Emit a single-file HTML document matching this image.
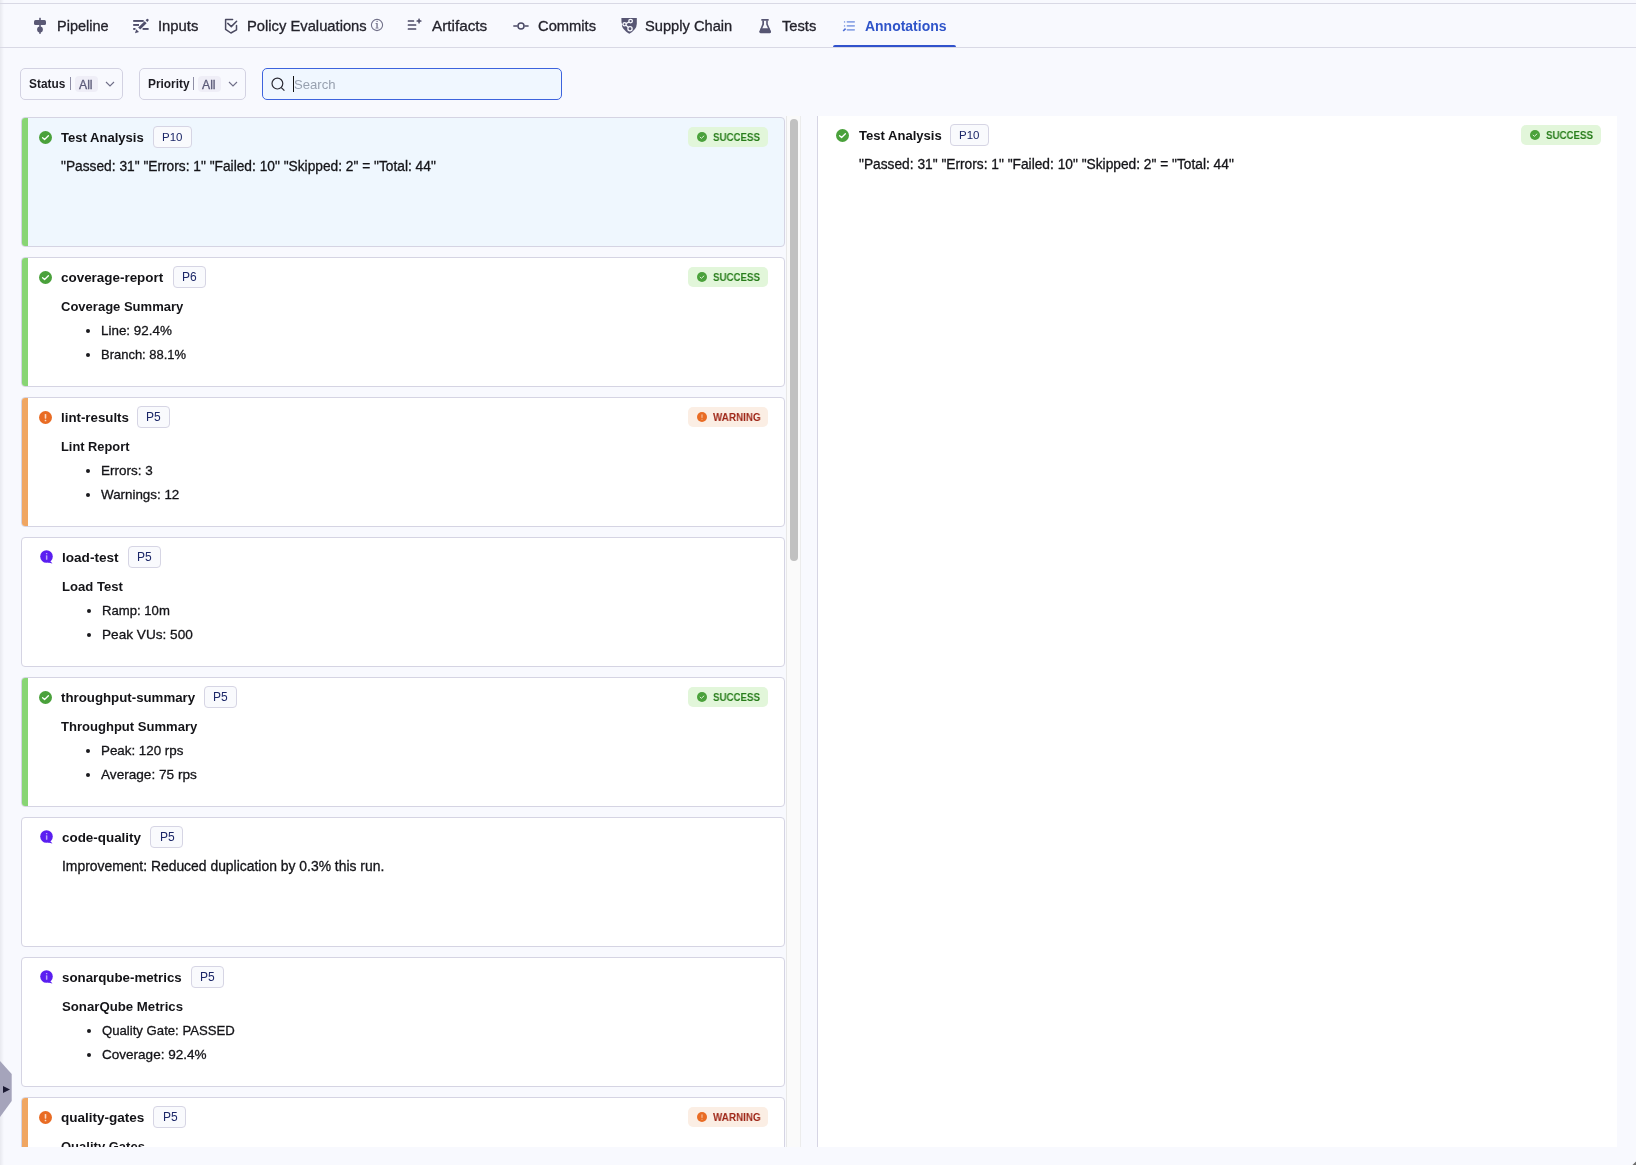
<!DOCTYPE html><html><head><meta charset="utf-8"><style>
*{box-sizing:border-box;margin:0;padding:0}
html,body{width:1636px;height:1165px;overflow:hidden;background:#f8f9fe;font-family:"Liberation Sans", sans-serif;color:#1b1b1f}
.a{position:absolute}
.t{position:absolute;white-space:nowrap;line-height:20px;will-change:transform}
.m{-webkit-text-stroke:0.3px currentColor}
.b{font-weight:bold}
</style></head><body><div class="a" style="left:0;top:0;width:4px;height:1165px;background:linear-gradient(to right,#e8e9ef,rgba(248,249,253,0))"></div>
<div class="a" style="left:0;top:3px;width:1636px;height:1px;background:#d9d9e5"></div>
<div class="a" style="left:0;top:47px;width:1636px;height:1px;background:#d9d9e5"></div>
<div class="t m" style="left:56.7px;top:16.00px;font-size:14.5px;color:#24232c;">Pipeline</div>
<div class="t m" style="left:157.5px;top:16.00px;font-size:14.83px;color:#24232c;">Inputs</div>
<div class="t m" style="left:246.7px;top:16.00px;font-size:14.76px;color:#24232c;">Policy Evaluations</div>
<div class="t m" style="left:432px;top:16.00px;font-size:15.3px;color:#24232c;">Artifacts</div>
<div class="t m" style="left:537.5px;top:16.00px;font-size:14.73px;color:#24232c;">Commits</div>
<div class="t m" style="left:645px;top:16.00px;font-size:14.68px;color:#24232c;">Supply Chain</div>
<div class="t m" style="left:781.5px;top:16.00px;font-size:14.7px;color:#24232c;">Tests</div>
<div class="t b" style="left:865.2px;top:16.00px;font-size:13.97px;color:#2f54c9;">Annotations</div>
<div class="a" style="left:833px;top:45px;width:123px;height:2px;background:#3152cc;border-radius:2px 2px 0 0"></div>

<svg class="a" style="left:0;top:0" width="1000" height="48" viewBox="0 0 1000 48">
 <g fill="#5a5975">
  <rect x="39.2" y="17.8" width="1.6" height="16"/>
  <rect x="34" y="20" width="12" height="5" rx="1.5"/>
  <circle cx="40" cy="29.5" r="2.9"/>
 </g>
 <g fill="#4f4e6b">
  <rect x="133.2" y="20" width="10.5" height="1.9"/>
  <rect x="133.2" y="24" width="5.8" height="1.9"/>
  <rect x="133.2" y="28" width="2.3" height="1.9"/>
  <rect x="142.6" y="28" width="6" height="1.9"/>
  <path d="M138.2 27.6 L144.6 21.2 L146.6 23.2 L140.2 29.6 Z"/>
  <path d="M135 33.2 L136.2 29.2 L139 32 Z"/>
  <path d="M145.6 20.2 L146.8 19 Q147.6 18.4 148.4 19.2 Q149 20 148.4 20.8 L147.4 22 Z"/>
 </g>
 <g fill="none" stroke="#4a4960" stroke-width="1.5" stroke-linejoin="round" stroke-linecap="round">
  <path d="M232.6 19.6 H225.6 V29.4 L230.9 33 L236.5 29.8 V25.4"/>
  <path d="M227.8 23.4 L231.3 26.6 L236.6 21.2"/>
 </g>
 <g fill="none" stroke="#727189" stroke-width="1.1">
  <circle cx="377" cy="25" r="5.6"/>
 </g>
 <g fill="#727189"><rect x="376.4" y="23.2" width="1.3" height="4.6"/><rect x="375.6" y="27.6" width="2.9" height="0.9"/><rect x="375.6" y="23" width="1.6" height="0.9"/><circle cx="377.1" cy="21.4" r="0.7"/></g>
 <g fill="#4b4a66">
  <rect x="407.7" y="20.2" width="6.5" height="1.6" rx="0.5"/>
  <rect x="407.7" y="24.2" width="8.6" height="1.6" rx="0.5"/>
  <rect x="407.7" y="28.2" width="8.6" height="1.6" rx="0.5"/>
  <rect x="418.3" y="18.4" width="1.5" height="5" rx="0.5"/>
  <rect x="416.5" y="20.2" width="5" height="1.5" rx="0.5"/>
 </g>
 <g fill="none" stroke="#4b4a66" stroke-width="1.5">
  <path d="M513.3 26 H517.6 M524.4 26 H528.6"/>
  <circle cx="521" cy="26" r="3"/>
 </g>
 <g>
  <path fill="#575673" d="M621.4 18 H636.8 V24 Q636.6 29.5 629.3 33.8 Q622 29.5 621.6 24 Z"/>
  <g stroke="#f8f9fe" stroke-width="1.3" fill="#575673">
   <path d="M624.8 24.3 L630.6 21.1 M624.8 24.3 L630 28.7" />
   <circle cx="630.6" cy="21.1" r="1.8"/>
   <circle cx="624.6" cy="24.3" r="1.6"/>
   <circle cx="630" cy="28.7" r="2.1"/>
  </g>
  <path d="M621 22.6 L622.6 24.4 L621 26" fill="#f8f9fe"/>
 </g>
 <g fill="#575673">
  <rect x="761.2" y="19" width="7.6" height="1.7" rx="0.6"/>
  <path d="M762.3 20.6 H764 V24.4 L760.9 31.4 H769.5 L766.2 24.4 V20.6 H767.8 V24.1 L771 31.6 Q771.4 33.2 769.8 33.2 H760.6 Q759 33.2 759.4 31.6 L762.3 24.1 Z"/>
  <path d="M760.8 28.2 H769.4 L770.8 32 H759.3 Z"/>
 </g>
 <g fill="#8ea6e6">
  <rect x="846.6" y="21" width="8.4" height="1.8" rx="0.8"/>
  <rect x="846.6" y="25" width="8.4" height="1.8" rx="0.8"/>
  <rect x="846.6" y="29" width="8.4" height="1.8" rx="0.8"/>
  <rect x="843.9" y="21" width="1.3" height="1.8" rx="0.5"/>
  <rect x="843.9" y="25" width="1.3" height="1.8" rx="0.5"/>
 </g>
 <path d="M843.2 31 L845.6 28.6" stroke="#4d6fd6" stroke-width="1.6"/>
</svg>
<div class="a" style="left:20px;top:68px;width:103px;height:32px;border:1px solid #d3d2e2;border-radius:5px"></div>
<div class="t b" style="left:29.3px;top:74.00px;font-size:11.88px;color:#1c1b22;">Status</div>
<div class="a" style="left:70.0px;top:77px;width:1px;height:13px;background:#8f8ea6"></div>
<div class="a" style="left:75.0px;top:76px;width:23px;height:16px;background:#efeef7;border-radius:4px"></div>
<div class="t m" style="left:78.6px;top:75.00px;font-size:12.2px;color:#5b5a78;">All</div>
<svg class="a" style="left:105px;top:80px" width="10" height="8"><path d="M1 2 L5 6 L9 2" fill="none" stroke="#6f6e88" stroke-width="1.1"/></svg>
<div class="a" style="left:139px;top:68px;width:107px;height:32px;border:1px solid #d3d2e2;border-radius:5px"></div>
<div class="t b" style="left:148.3px;top:74.00px;font-size:11.88px;color:#1c1b22;">Priority</div>
<div class="a" style="left:193.0px;top:77px;width:1px;height:13px;background:#8f8ea6"></div>
<div class="a" style="left:198.0px;top:76px;width:23px;height:16px;background:#efeef7;border-radius:4px"></div>
<div class="t m" style="left:201.6px;top:75.00px;font-size:12.2px;color:#5b5a78;">All</div>
<svg class="a" style="left:228px;top:80px" width="10" height="8"><path d="M1 2 L5 6 L9 2" fill="none" stroke="#6f6e88" stroke-width="1.1"/></svg>
<div class="a" style="left:262px;top:68px;width:300px;height:32px;border:1px solid #3d63dd;border-radius:5px;background:#f0f7ff"></div>
<svg class="a" style="left:270px;top:76px" width="16" height="16"><circle cx="7.4" cy="7.6" r="5.4" fill="none" stroke="#2a2a33" stroke-width="1.2"/><path d="M11.3 11.6 L14.4 14.6" stroke="#2a2a33" stroke-width="1.3"/></svg>
<div class="a" style="left:293px;top:76px;width:1.3px;height:16px;background:#111"></div>
<div class="t" style="left:294px;top:75.00px;font-size:13.1px;color:#98a1b0;">Search</div>
<div class="a" style="left:0;top:116px;width:786px;height:1031px;overflow:hidden">
<div class="a" style="left:21px;top:1px;width:764px;height:130px;border:1px solid #d5d4e3;border-radius:4px;background:#eff7fe;overflow:hidden">
<div class="a" style="left:-1px;top:-1px;width:7px;height:130px;background:#88d574"></div>
</div>
<div class="a" style="left:21px;top:141px;width:764px;height:130px;border:1px solid #d5d4e3;border-radius:4px;background:#ffffff;overflow:hidden">
<div class="a" style="left:-1px;top:-1px;width:7px;height:130px;background:#88d574"></div>
</div>
<div class="a" style="left:21px;top:281px;width:764px;height:130px;border:1px solid #d5d4e3;border-radius:4px;background:#ffffff;overflow:hidden">
<div class="a" style="left:-1px;top:-1px;width:7px;height:130px;background:#f0a662"></div>
</div>
<div class="a" style="left:21px;top:421px;width:764px;height:130px;border:1px solid #d5d4e3;border-radius:4px;background:#ffffff;overflow:hidden">
</div>
<div class="a" style="left:21px;top:561px;width:764px;height:130px;border:1px solid #d5d4e3;border-radius:4px;background:#ffffff;overflow:hidden">
<div class="a" style="left:-1px;top:-1px;width:7px;height:130px;background:#88d574"></div>
</div>
<div class="a" style="left:21px;top:701px;width:764px;height:130px;border:1px solid #d5d4e3;border-radius:4px;background:#ffffff;overflow:hidden">
</div>
<div class="a" style="left:21px;top:841px;width:764px;height:130px;border:1px solid #d5d4e3;border-radius:4px;background:#ffffff;overflow:hidden">
</div>
<div class="a" style="left:21px;top:981px;width:764px;height:130px;border:1px solid #d5d4e3;border-radius:4px;background:#ffffff;overflow:hidden">
<div class="a" style="left:-1px;top:-1px;width:7px;height:130px;background:#f0a662"></div>
</div>
<div class="a" style="left:0;top:-116px;width:1636px;height:1165px">
<svg class="a" style="left:38.5px;top:130.5px" width="13.0" height="13.0" viewBox="0 0 13 13"><circle cx="6.5" cy="6.5" r="6.5" fill="#4aa13b"/><path d="M3.6 6.7 L5.6 8.5 L9.4 4.8" fill="none" stroke="#fff" stroke-width="1.3" stroke-linecap="round" stroke-linejoin="round"/></svg>
<div class="t b" style="left:61px;top:128.00px;font-size:13.05px;color:#121216;">Test Analysis</div>
<div class="a" style="left:153.2px;top:126px;width:39px;height:22px;border:1px solid #d6d5e4;border-radius:4px;background:#f9fafd"></div>
<div class="t" style="left:162.46949218749998px;top:127.00px;font-size:11.5px;color:#1c2768;">P10</div>
<div class="a" style="left:688px;top:127px;width:80px;height:20px;border-radius:5px;background:#e2f6da"></div>
<svg class="a" style="left:697px;top:132px" width="10" height="10" viewBox="0 0 10 10"><circle cx="5" cy="5" r="5" fill="#4aa13b"/><path d="M3.1 5.2 L4.4 6.3 L6.9 4" fill="none" stroke="#dff3d8" stroke-width="1" stroke-linecap="round" stroke-linejoin="round"/></svg>
<div class="t b" style="left:712.7px;top:127.00px;font-size:10.8px;color:#287d1b;transform:scaleX(0.9);transform-origin:0 0;">SUCCESS</div>
<div class="t m" style="left:61px;top:157.00px;font-size:13.76px;color:#141418;">&quot;Passed: 31&quot; &quot;Errors: 1&quot; &quot;Failed: 10&quot; &quot;Skipped: 2&quot; = &quot;Total: 44&quot;</div>
<svg class="a" style="left:38.5px;top:270.5px" width="13.0" height="13.0" viewBox="0 0 13 13"><circle cx="6.5" cy="6.5" r="6.5" fill="#4aa13b"/><path d="M3.6 6.7 L5.6 8.5 L9.4 4.8" fill="none" stroke="#fff" stroke-width="1.3" stroke-linecap="round" stroke-linejoin="round"/></svg>
<div class="t b" style="left:61px;top:268.00px;font-size:13.43px;color:#121216;">coverage-report</div>
<div class="a" style="left:173.1px;top:266px;width:33px;height:22px;border:1px solid #d6d5e4;border-radius:4px;background:#f9fafd"></div>
<div class="t" style="left:182.26125px;top:267.00px;font-size:12px;color:#1c2768;">P6</div>
<div class="a" style="left:688px;top:267px;width:80px;height:20px;border-radius:5px;background:#e2f6da"></div>
<svg class="a" style="left:697px;top:272px" width="10" height="10" viewBox="0 0 10 10"><circle cx="5" cy="5" r="5" fill="#4aa13b"/><path d="M3.1 5.2 L4.4 6.3 L6.9 4" fill="none" stroke="#dff3d8" stroke-width="1" stroke-linecap="round" stroke-linejoin="round"/></svg>
<div class="t b" style="left:712.7px;top:267.00px;font-size:10.8px;color:#287d1b;transform:scaleX(0.9);transform-origin:0 0;">SUCCESS</div>
<div class="t b" style="left:61px;top:297.00px;font-size:13.03px;color:#141418;">Coverage Summary</div>
<div class="a" style="left:85.5px;top:329px;width:4px;height:4px;border-radius:50%;background:#1a1a1e"></div>
<div class="t m" style="left:101px;top:321.00px;font-size:13.41px;color:#141418;">Line: 92.4%</div>
<div class="a" style="left:85.5px;top:353px;width:4px;height:4px;border-radius:50%;background:#1a1a1e"></div>
<div class="t m" style="left:101px;top:345.00px;font-size:12.97px;color:#141418;">Branch: 88.1%</div>
<svg class="a" style="left:38.5px;top:410.5px" width="13.0" height="13.0" viewBox="0 0 13 13"><circle cx="6.5" cy="6.5" r="6.5" fill="#e96c24"/><rect x="5.7" y="2.9" width="1.6" height="4.8" rx="0.6" fill="#fbd9c4"/><rect x="5.7" y="8.7" width="1.6" height="1.5" rx="0.5" fill="#fbd9c4"/></svg>
<div class="t b" style="left:61px;top:408.00px;font-size:13.29px;color:#121216;">lint-results</div>
<div class="a" style="left:137.1px;top:406px;width:33px;height:22px;border:1px solid #d6d5e4;border-radius:4px;background:#f9fafd"></div>
<div class="t" style="left:146.26125px;top:407.00px;font-size:12px;color:#1c2768;">P5</div>
<div class="a" style="left:688px;top:407px;width:80px;height:20px;border-radius:5px;background:#fbeee4"></div>
<svg class="a" style="left:697px;top:412px" width="10" height="10" viewBox="0 0 10 10"><circle cx="5" cy="5" r="5" fill="#e96c24"/><rect x="4.45" y="2.3" width="1.1" height="3.6" rx="0.4" fill="#f6c6a6"/><rect x="4.45" y="6.7" width="1.1" height="1" rx="0.4" fill="#f6c6a6"/></svg>
<div class="t b" style="left:712.7px;top:407.00px;font-size:10.8px;color:#9e2516;transform:scaleX(0.913);transform-origin:0 0;">WARNING</div>
<div class="t b" style="left:61px;top:437.00px;font-size:12.84px;color:#141418;">Lint Report</div>
<div class="a" style="left:85.5px;top:469px;width:4px;height:4px;border-radius:50%;background:#1a1a1e"></div>
<div class="t m" style="left:101px;top:461.00px;font-size:13.48px;color:#141418;">Errors: 3</div>
<div class="a" style="left:85.5px;top:493px;width:4px;height:4px;border-radius:50%;background:#1a1a1e"></div>
<div class="t m" style="left:101px;top:485.00px;font-size:13.39px;color:#141418;">Warnings: 12</div>
<svg class="a" style="left:39.5px;top:550.0px" width="14.0" height="14.0" viewBox="0 0 14 14"><circle cx="6.5" cy="6.5" r="6.3" fill="#5a1ff0"/><path d="M9 10 L12.6 13.4 L8 12.4 Z" fill="#5a1ff0"/><rect x="5.9" y="5.2" width="1.5" height="4.6" rx="0.5" fill="#b9a6f8"/><rect x="5.9" y="3" width="1.5" height="1.3" rx="0.5" fill="#b9a6f8"/></svg>
<div class="t b" style="left:62px;top:548.00px;font-size:13.59px;color:#121216;">load-test</div>
<div class="a" style="left:128.3px;top:546px;width:33px;height:22px;border:1px solid #d6d5e4;border-radius:4px;background:#f9fafd"></div>
<div class="t" style="left:137.46125px;top:547.00px;font-size:12px;color:#1c2768;">P5</div>
<div class="t b" style="left:62px;top:577.00px;font-size:13.1px;color:#141418;">Load Test</div>
<div class="a" style="left:86.5px;top:609px;width:4px;height:4px;border-radius:50%;background:#1a1a1e"></div>
<div class="t m" style="left:102px;top:601.00px;font-size:13.13px;color:#141418;">Ramp: 10m</div>
<div class="a" style="left:86.5px;top:633px;width:4px;height:4px;border-radius:50%;background:#1a1a1e"></div>
<div class="t m" style="left:102px;top:625.00px;font-size:13.61px;color:#141418;">Peak VUs: 500</div>
<svg class="a" style="left:38.5px;top:690.5px" width="13.0" height="13.0" viewBox="0 0 13 13"><circle cx="6.5" cy="6.5" r="6.5" fill="#4aa13b"/><path d="M3.6 6.7 L5.6 8.5 L9.4 4.8" fill="none" stroke="#fff" stroke-width="1.3" stroke-linecap="round" stroke-linejoin="round"/></svg>
<div class="t b" style="left:61px;top:688.00px;font-size:13.27px;color:#121216;">throughput-summary</div>
<div class="a" style="left:204.1px;top:686px;width:33px;height:22px;border:1px solid #d6d5e4;border-radius:4px;background:#f9fafd"></div>
<div class="t" style="left:213.26125px;top:687.00px;font-size:12px;color:#1c2768;">P5</div>
<div class="a" style="left:688px;top:687px;width:80px;height:20px;border-radius:5px;background:#e2f6da"></div>
<svg class="a" style="left:697px;top:692px" width="10" height="10" viewBox="0 0 10 10"><circle cx="5" cy="5" r="5" fill="#4aa13b"/><path d="M3.1 5.2 L4.4 6.3 L6.9 4" fill="none" stroke="#dff3d8" stroke-width="1" stroke-linecap="round" stroke-linejoin="round"/></svg>
<div class="t b" style="left:712.7px;top:687.00px;font-size:10.8px;color:#287d1b;transform:scaleX(0.9);transform-origin:0 0;">SUCCESS</div>
<div class="t b" style="left:61px;top:717.00px;font-size:13.05px;color:#141418;">Throughput Summary</div>
<div class="a" style="left:85.5px;top:749px;width:4px;height:4px;border-radius:50%;background:#1a1a1e"></div>
<div class="t m" style="left:101px;top:741.00px;font-size:13.37px;color:#141418;">Peak: 120 rps</div>
<div class="a" style="left:85.5px;top:773px;width:4px;height:4px;border-radius:50%;background:#1a1a1e"></div>
<div class="t m" style="left:101px;top:765.00px;font-size:13.61px;color:#141418;">Average: 75 rps</div>
<svg class="a" style="left:39.5px;top:830.0px" width="14.0" height="14.0" viewBox="0 0 14 14"><circle cx="6.5" cy="6.5" r="6.3" fill="#5a1ff0"/><path d="M9 10 L12.6 13.4 L8 12.4 Z" fill="#5a1ff0"/><rect x="5.9" y="5.2" width="1.5" height="4.6" rx="0.5" fill="#b9a6f8"/><rect x="5.9" y="3" width="1.5" height="1.3" rx="0.5" fill="#b9a6f8"/></svg>
<div class="t b" style="left:62px;top:828.00px;font-size:13.41px;color:#121216;">code-quality</div>
<div class="a" style="left:150.4px;top:826px;width:33px;height:22px;border:1px solid #d6d5e4;border-radius:4px;background:#f9fafd"></div>
<div class="t" style="left:159.56125px;top:827.00px;font-size:12px;color:#1c2768;">P5</div>
<div class="t m" style="left:62px;top:856.00px;font-size:13.91px;color:#141418;">Improvement: Reduced duplication by 0.3% this run.</div>
<svg class="a" style="left:39.5px;top:970.0px" width="14.0" height="14.0" viewBox="0 0 14 14"><circle cx="6.5" cy="6.5" r="6.3" fill="#5a1ff0"/><path d="M9 10 L12.6 13.4 L8 12.4 Z" fill="#5a1ff0"/><rect x="5.9" y="5.2" width="1.5" height="4.6" rx="0.5" fill="#b9a6f8"/><rect x="5.9" y="3" width="1.5" height="1.3" rx="0.5" fill="#b9a6f8"/></svg>
<div class="t b" style="left:62px;top:968.00px;font-size:13.3px;color:#121216;">sonarqube-metrics</div>
<div class="a" style="left:191.3px;top:966px;width:33px;height:22px;border:1px solid #d6d5e4;border-radius:4px;background:#f9fafd"></div>
<div class="t" style="left:200.46125px;top:967.00px;font-size:12px;color:#1c2768;">P5</div>
<div class="t b" style="left:62px;top:997.00px;font-size:13.21px;color:#141418;">SonarQube Metrics</div>
<div class="a" style="left:86.5px;top:1029px;width:4px;height:4px;border-radius:50%;background:#1a1a1e"></div>
<div class="t m" style="left:102px;top:1021.00px;font-size:13.16px;color:#141418;">Quality Gate: PASSED</div>
<div class="a" style="left:86.5px;top:1053px;width:4px;height:4px;border-radius:50%;background:#1a1a1e"></div>
<div class="t m" style="left:102px;top:1045.00px;font-size:13.54px;color:#141418;">Coverage: 92.4%</div>
<svg class="a" style="left:38.5px;top:1110.5px" width="13.0" height="13.0" viewBox="0 0 13 13"><circle cx="6.5" cy="6.5" r="6.5" fill="#e96c24"/><rect x="5.7" y="2.9" width="1.6" height="4.8" rx="0.6" fill="#fbd9c4"/><rect x="5.7" y="8.7" width="1.6" height="1.5" rx="0.5" fill="#fbd9c4"/></svg>
<div class="t b" style="left:61px;top:1108.00px;font-size:13.53px;color:#121216;">quality-gates</div>
<div class="a" style="left:153.4px;top:1106px;width:33px;height:22px;border:1px solid #d6d5e4;border-radius:4px;background:#f9fafd"></div>
<div class="t" style="left:162.56125px;top:1107.00px;font-size:12px;color:#1c2768;">P5</div>
<div class="a" style="left:688px;top:1107px;width:80px;height:20px;border-radius:5px;background:#fbeee4"></div>
<svg class="a" style="left:697px;top:1112px" width="10" height="10" viewBox="0 0 10 10"><circle cx="5" cy="5" r="5" fill="#e96c24"/><rect x="4.45" y="2.3" width="1.1" height="3.6" rx="0.4" fill="#f6c6a6"/><rect x="4.45" y="6.7" width="1.1" height="1" rx="0.4" fill="#f6c6a6"/></svg>
<div class="t b" style="left:712.7px;top:1107.00px;font-size:10.8px;color:#9e2516;transform:scaleX(0.913);transform-origin:0 0;">WARNING</div>
<div class="t b" style="left:61px;top:1137.00px;font-size:13.03px;color:#141418;">Quality Gates</div>
<div class="a" style="left:85.5px;top:1169px;width:4px;height:4px;border-radius:50%;background:#1a1a1e"></div>
<div class="t m" style="left:101px;top:1161.00px;font-size:13.41px;color:#141418;">Gate A: PASSED</div>
<div class="a" style="left:85.5px;top:1193px;width:4px;height:4px;border-radius:50%;background:#1a1a1e"></div>
<div class="t m" style="left:101px;top:1185.00px;font-size:13.41px;color:#141418;">Gate B: PASSED</div>
</div>
</div>
<div class="a" style="left:786px;top:116px;width:15px;height:1031px;background:#fafafa;border-left:1px solid #e8e8e8;border-right:1px solid #ececec"></div>
<div class="a" style="left:790px;top:119px;width:8px;height:442px;background:#c1c1c1;border-radius:4px"></div>
<div class="a" style="left:817px;top:116px;width:800px;height:1031px;background:#ffffff;border-left:1px solid #d6d5e4"></div>
<svg class="a" style="left:835.5px;top:128.5px" width="13.0" height="13.0" viewBox="0 0 13 13"><circle cx="6.5" cy="6.5" r="6.5" fill="#4aa13b"/><path d="M3.6 6.7 L5.6 8.5 L9.4 4.8" fill="none" stroke="#fff" stroke-width="1.3" stroke-linecap="round" stroke-linejoin="round"/></svg>
<div class="t b" style="left:858.5px;top:126.00px;font-size:13.05px;color:#121216;">Test Analysis</div>
<div class="a" style="left:950.0px;top:124px;width:39px;height:22px;border:1px solid #d6d5e4;border-radius:4px;background:#f9fafd"></div>
<div class="t" style="left:959.2694921875px;top:125.00px;font-size:11.5px;color:#1c2768;">P10</div>
<div class="a" style="left:1521px;top:125px;width:80px;height:20px;border-radius:5px;background:#e2f6da"></div>
<svg class="a" style="left:1530px;top:130px" width="10" height="10" viewBox="0 0 10 10"><circle cx="5" cy="5" r="5" fill="#4aa13b"/><path d="M3.1 5.2 L4.4 6.3 L6.9 4" fill="none" stroke="#dff3d8" stroke-width="1" stroke-linecap="round" stroke-linejoin="round"/></svg>
<div class="t b" style="left:1545.7px;top:125.00px;font-size:10.8px;color:#287d1b;transform:scaleX(0.9);transform-origin:0 0;">SUCCESS</div>
<div class="t m" style="left:858.5px;top:155.00px;font-size:13.76px;color:#141418;">&quot;Passed: 31&quot; &quot;Errors: 1&quot; &quot;Failed: 10&quot; &quot;Skipped: 2&quot; = &quot;Total: 44&quot;</div>
<svg class="a" style="left:1632px;top:1161px" width="4" height="4"><path d="M4 0.5 V4 H0.5 Z" fill="#6d6d6d"/></svg>
<svg class="a" style="left:0;top:1061px" width="12" height="56"><path d="M0 0 L11.7 13 V40 L0 56 Z" fill="#a5a4bb"/><path d="M3 25 L10 28.5 L3 32 Z" fill="#1b1a33"/></svg></body></html>
